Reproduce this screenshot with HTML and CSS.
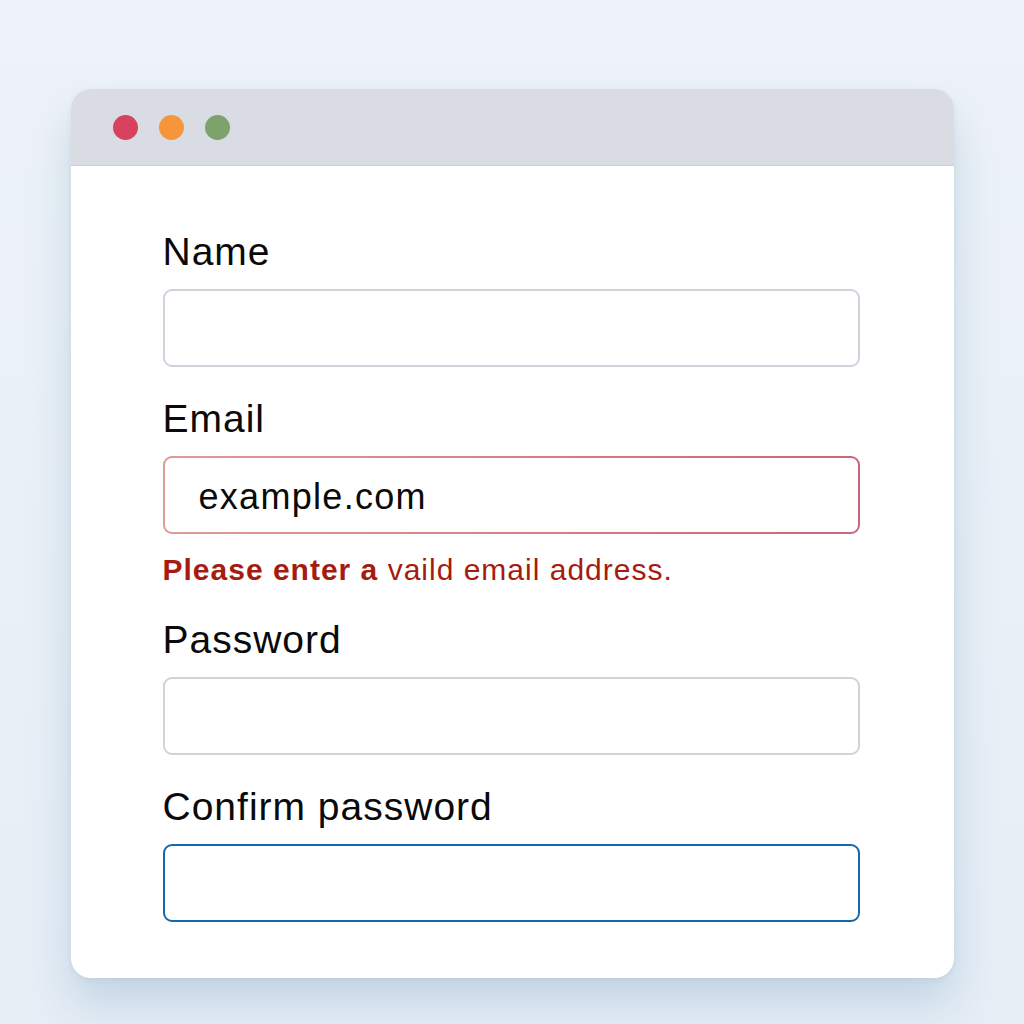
FILE: index.html
```html
<!DOCTYPE html>
<html lang="en">
<head>
    <meta charset="UTF-8">
    <meta name="viewport" content="width=device-width, initial-scale=1.0">
    <title>Sign up</title>
    <link rel="stylesheet" href="styles.css">
</head>
<body>
    <div class="window">
        <div class="titlebar">
            <span class="dot dot-red"></span>
            <span class="dot dot-orange"></span>
            <span class="dot dot-green"></span>
        </div>

        <form class="form">
            <div class="field">
                <label for="name">Name</label>
                <input type="text" id="name" class="input">
            </div>

            <div class="field">
                <label for="email">Email</label>
                <input type="text" id="email" class="input input-error" value="example.com">
                <div class="error-text"><b>Please enter a</b> vaild email address.</div>
            </div>

            <div class="field field-after-error">
                <label for="password">Password</label>
                <input type="password" id="password" class="input">
            </div>

            <div class="field">
                <label for="confirm">Confirm password</label>
                <input type="password" id="confirm" class="input input-focus">
            </div>
        </form>
    </div>
</body>
</html>
```

FILE: styles.css
```css
* {
    box-sizing: border-box;
    margin: 0;
    padding: 0;
}

body {
    font-family: 'Liberation Sans', Arial, sans-serif;
    min-height: 100vh;
    background: linear-gradient(180deg, #edf3f8 0%, #e6eef6 100%);
    padding-top: 89px;
}

.window {
    width: 883px;
    margin: 0 auto;
    background-color: white;
    border-radius: 20px;
    box-shadow: 0 26px 44px rgba(120, 158, 192, 0.32), 0 2px 6px rgba(0, 0, 0, 0.06);
    overflow: hidden;
}

.titlebar {
    height: 77px;
    background-color: #d9dce3;
    border-bottom: 1px solid #c9cdd5;
    display: flex;
    align-items: center;
    gap: 21px;
    padding-left: 42px;
}

.dot {
    width: 25px;
    height: 25px;
    border-radius: 50%;
}

.dot-red {
    background-color: #d8425c;
}

.dot-orange {
    background-color: #f5963c;
}

.dot-green {
    background-color: #7ba36b;
}

.form {
    padding: 64px 94px 56px 92px;
}

.field + .field {
    margin-top: 30px;
}

.field.field-after-error {
    margin-top: 32px;
}

label {
    display: block;
    font-size: 39px;
    line-height: 43px;
    letter-spacing: 1px;
    color: #0a0a0a;
    margin-bottom: 16px;
}

.input {
    display: block;
    width: 100%;
    height: 78px;
    border: 2px solid #cfd3db;
    border-radius: 9px;
    padding: 4px 34px 0;
    font-family: 'Liberation Sans', Arial, sans-serif;
    font-size: 36px;
    letter-spacing: 1.3px;
    color: #0a0a0a;
    background-color: white;
    outline: none;
}

.input-error {
    border: 2px solid transparent;
    background: linear-gradient(white, white) padding-box,
                linear-gradient(90deg, #dc9d96 0%, #d0637a 100%) border-box;
}

.input-focus {
    border: 2.5px solid #1468b0;
}

.error-text {
    margin-top: 20px;
    font-size: 30px;
    line-height: 32px;
    letter-spacing: 1px;
    color: #a61b10;
}
```
